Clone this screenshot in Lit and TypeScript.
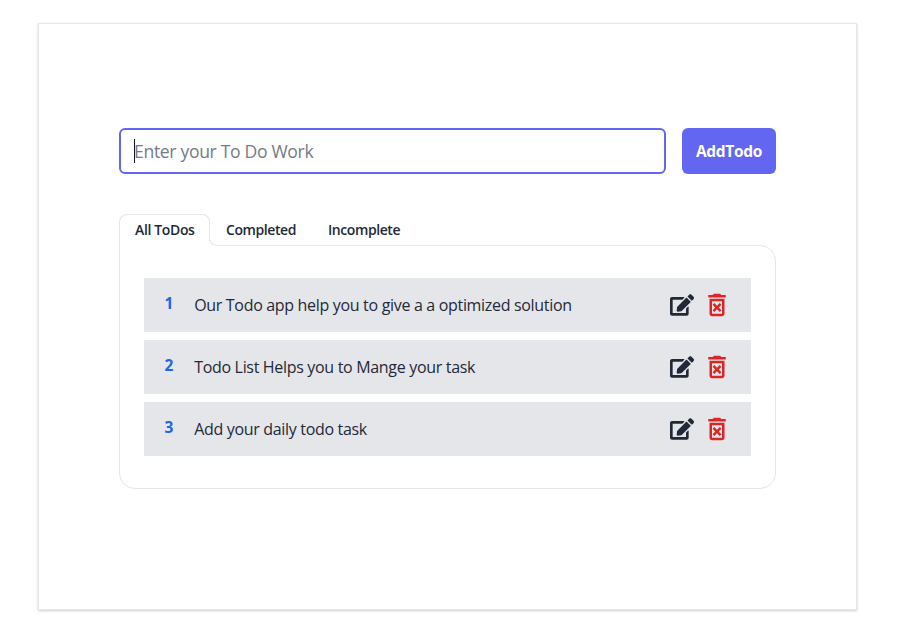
import { LitElement, html, css } from "lit";
import { customElement, property, state } from "lit/decorators.js";
import { classMap } from "lit/directives/class-map.js";

@customElement("todo-row")
class TodoRow extends LitElement {
  @property({ type: Number }) number = 0;
  @property() text = "";

  static styles = css`
    :host { display: block; }
    .row {
      display: flex;
      align-items: center;
      height: 54px;
      padding: 0 19px 0 20.5px;
      box-sizing: border-box;
      background: #e5e6ea;
    }
    .num {
      width: 29.7px;
      height: 30px;
      line-height: 27px;
      font-size: 15.5px;
      font-weight: 700;
      color: #2563eb;
    }
    .text { flex: 1; font-size: 16px; line-height: 24px; letter-spacing: -0.32px; white-space: nowrap; }
    .edit { width: 24px; height: 24px; fill: #1f2937; }
    .trash { width: 30px; height: 30px; margin-left: 8px; fill: #dc2626; }
  `;

  render() {
    return html`<div class="row">
      <span class="num">${this.number}</span>
      <span class="text">${this.text}</span>
      <svg class="edit" viewBox="0 0 576 512"><path d="M402.6 83.2l90.2 90.2c3.8 3.8 3.8 10 0 13.8L274.4 405.6l-92.8 10.3c-12.4 1.4-22.9-9.1-21.5-21.5l10.3-92.8L388.8 83.2c3.8-3.8 10-3.8 13.8 0zm162-22.9l-48.8-48.8c-15.2-15.2-39.9-15.2-55.2 0l-35.4 35.4c-3.8 3.8-3.8 10 0 13.8l90.2 90.2c3.8 3.8 10 3.8 13.8 0l35.4-35.4c15.2-15.3 15.2-40 0-55.2zM384 346.2V448H64V128h229.8c3.2 0 6.2-1.3 8.5-3.5l40-40c7.6-7.6 2.2-20.5-8.5-20.5H48C21.5 64 0 85.5 0 112v352c0 26.5 21.5 48 48 48h352c26.5 0 48-21.5 48-48V306.2c0-10.7-12.9-16-20.5-8.5l-40 40c-2.2 2.3-3.5 5.3-3.5 8.5z"/></svg>
      <svg class="trash" viewBox="0 0 24 24"><path d="M14.12 10.47L12 12.59l-2.13-2.12-1.41 1.41L10.59 14l-2.12 2.12 1.41 1.41L12 15.41l2.12 2.12 1.41-1.41L13.41 14l2.12-2.12zM15.5 4l-1-1h-5l-1 1H5v2h14V4zM6 19c0 1.1.9 2 2 2h8c1.1 0 2-.9 2-2V7H6v12zM8 9h8v10H8V9z"/></svg>
    </div>`;
  }
}

@customElement("app-root")
class AppRoot extends LitElement {
  @state() private active = 0;

  private tabs = ["All ToDos", "Completed", "Incomplete"];
  private todos = [
    "Our Todo app help you to give a a optimized solution",
    "Todo List Helps you to Mange your task",
    "Add your daily todo task",
  ];

  static styles = css`
    :host {
      display: block;
      height: 631px;
      padding: 23px 40px 0 38px;
      box-sizing: border-box;
      background: #fff;
      color: #1f2937;
      font-family: "Open Sans", "Noto Sans", sans-serif;
    }
    .card {
      height: 587px;
      padding: 104px 80px 0;
      box-sizing: border-box;
      border: 1px solid #e5e6e6;
      box-shadow: 0 1px 3px rgba(0, 0, 0, 0.1), 0 1px 2px rgba(0, 0, 0, 0.1);
    }
    .form { display: flex; gap: 16px; height: 46px; }
    .field {
      flex: 1;
      display: flex;
      align-items: center;
      padding-left: 13px;
      border: 2px solid #6366f1;
      border-radius: 6px;
      font-size: 17.6px;
      color: #757b85;
    }
    .caret { width: 1px; height: 24px; margin-right: -1px; background: #111827; }
    .placeholder { letter-spacing: -0.34px; white-space: nowrap; }
    .add {
      width: 94px;
      padding: 0;
      border: 0;
      border-radius: 6px;
      background: #6366f1;
      color: #fff;
      font: 700 15.5px "Open Sans", sans-serif;
      letter-spacing: -0.3px;
    }
    .tabs { display: flex; height: 32px; margin-top: 40px; }
    .tab {
      position: relative;
      box-sizing: border-box;
      padding: 0 15px;
      border: 1px solid transparent;
      font-size: 14px;
      font-weight: 600;
      line-height: 30px;
      letter-spacing: -0.42px;
      white-space: nowrap;
    }
    .t0 { width: 91px; letter-spacing: -0.36px; }
    .t1 { width: 102px; }
    .t2 { width: 104px; }
    .tab.active {
      border-color: #e5e6e6;
      border-bottom: 0;
      border-radius: 8px 8px 0 0;
      background: #fff;
      z-index: 1;
    }
    .tab.active::after {
      content: "";
      position: absolute;
      right: -8px;
      bottom: 0;
      width: 8px;
      height: 8px;
      box-sizing: border-box;
      border: 1px solid #e5e6e6;
      border-top: 0;
      border-right: 0;
      border-bottom-left-radius: 8px;
      background: transparent;
    }
    .tab.active::before {
      content: "";
      position: absolute;
      right: -7px;
      bottom: 0;
      width: 8px;
      height: 8px;
      background: radial-gradient(circle at 100% 0, transparent 7px, #fff 7.5px);
    }
    .panel {
      display: flex;
      flex-direction: column;
      gap: 8px;
      height: 244px;
      margin-top: -1px;
      padding: 32px 24px;
      box-sizing: border-box;
      border: 1px solid #e5e6e6;
      border-radius: 0 16px 16px 16px;
    }
  `;

  render() {
    return html`<main class="card">
      <div class="form">
        <div class="field"><span class="caret"></span><span class="placeholder">Enter your To Do Work</span></div>
        <button class="add">AddTodo</button>
      </div>
      <div class="tabs">
        ${this.tabs.map((t, i) => html`<div
          class=${classMap({ tab: true, [`t${i}`]: true, active: i === this.active })}
          @click=${() => (this.active = i)}>${t}</div>`)}
      </div>
      <div class="panel">
        ${this.todos.map((t, i) => html`<todo-row .number=${i + 1} .text=${t}></todo-row>`)}
      </div>
    </main>`;
  }
}
